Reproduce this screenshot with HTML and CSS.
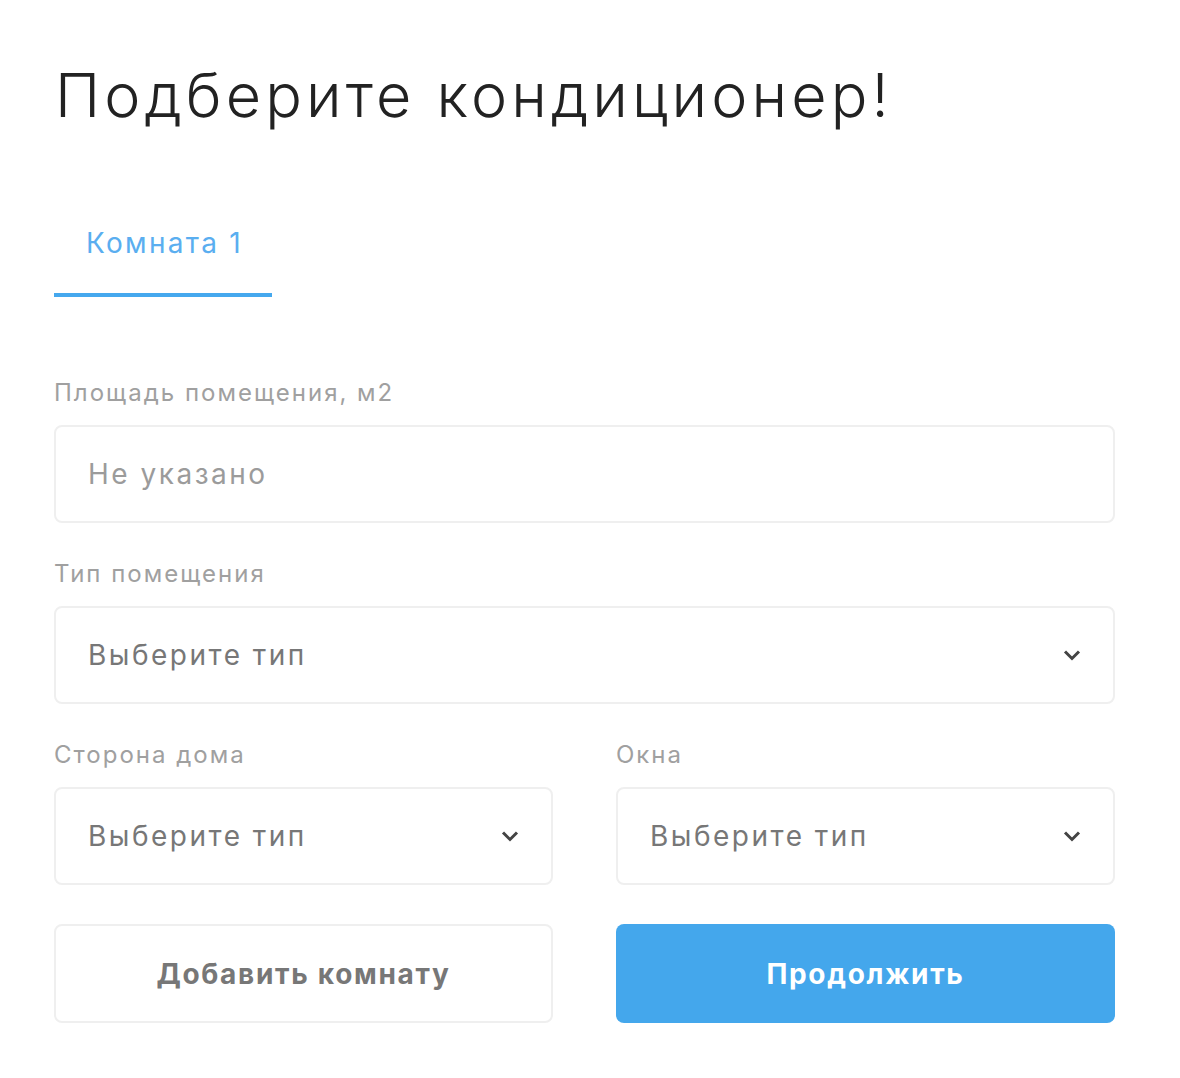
FILE: index.html
```html
<!DOCTYPE html>
<html lang="ru">
<head>
<meta charset="utf-8">
<link rel="stylesheet" href="styles.css">
</head>
<body>
<main class="page">
  <h1 class="title">Подберите кондиционер!</h1>
  <nav class="tabs">
    <div class="tab tab-active">Комната 1</div>
  </nav>
  <form class="form">
    <div class="field">
      <label class="label">Площадь помещения, м2</label>
      <div class="control"><span class="placeholder">Не указано</span></div>
    </div>
    <div class="field">
      <label class="label">Тип помещения</label>
      <div class="control select"><span class="value">Выберите тип</span>
        <svg class="chev" width="18" height="12" viewBox="0 0 18 12"><path d="M2 2.5l7 7 7-7" fill="none" stroke="#444" stroke-width="3"/></svg>
      </div>
    </div>
    <div class="row">
      <div class="field">
        <label class="label">Сторона дома</label>
        <div class="control select"><span class="value">Выберите тип</span>
          <svg class="chev" width="18" height="12" viewBox="0 0 18 12"><path d="M2 2.5l7 7 7-7" fill="none" stroke="#444" stroke-width="3"/></svg>
        </div>
      </div>
      <div class="field">
        <label class="label">Окна</label>
        <div class="control select"><span class="value">Выберите тип</span>
          <svg class="chev" width="18" height="12" viewBox="0 0 18 12"><path d="M2 2.5l7 7 7-7" fill="none" stroke="#444" stroke-width="3"/></svg>
        </div>
      </div>
    </div>
    <div class="row buttons">
      <button type="button" class="btn btn-ghost">Добавить комнату</button>
      <button type="button" class="btn btn-primary">Продолжить</button>
    </div>
  </form>
</main>
</body>
</html>
```
FILE: styles.css
```css
* { box-sizing: border-box; }
html, body { margin: 0; background: #fff; }
body { font-family: Inter, "Noto Sans", sans-serif; }
.page { width: 1061px; margin-left: 54px; padding-top: 56px; }
.title {
  margin: 0;
  font-size: 61px;
  font-weight: 300;
  line-height: 78px;
  color: #222;
  letter-spacing: 4.1px;
  padding-left: 1px;
}
.tabs { margin-top: 83px; display: flex; }
.tab {
  width: 218px;
  padding: 6px 0 0 32px;
  font-size: 28px;
  line-height: 40px;
  height: 80px;
  color: #5aaef0;
  letter-spacing: 2.3px;
  border-bottom: 4px solid #45a8ee;
}
.form { margin-top: 84px; }
.field { margin-bottom: 39px; }
.label {
  display: block;
  font-size: 24px;
  line-height: 24px;
  color: #a0a0a0;
  letter-spacing: 2px;
  margin-bottom: 20px;
}
.control {
  height: 98px;
  border: 2px solid #efefef;
  border-radius: 8px;
  display: flex;
  align-items: center;
  padding: 0 32px;
  font-size: 28px;
  letter-spacing: 2.5px;
}
.placeholder { color: #9b9b9b; }
.value { color: #777; flex: 1; }
.row { display: grid; grid-template-columns: 1fr 1fr; column-gap: 63px; }
.btn {
  height: 99px;
  border-radius: 8px;
  font-family: Inter, sans-serif;
  font-size: 28px;
  font-weight: 700;
  letter-spacing: 1.7px;
  cursor: pointer;
}
.btn-ghost { background: #fff; border: 2px solid #efefef; color: #777; }
.btn-primary { background: #44a7ec; border: none; color: #fff; }
```
